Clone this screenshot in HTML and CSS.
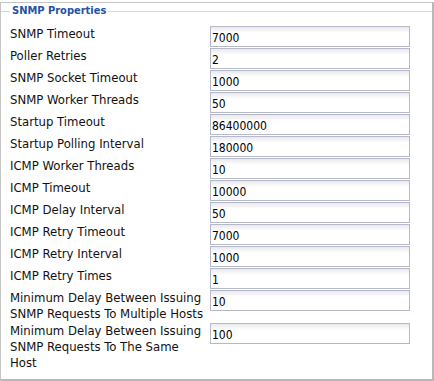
FILE: index.html
```html
<!DOCTYPE html>
<html lang="en">
<head>
    <meta charset="UTF-8">
    <title>SNMP Properties</title>
    <link rel="stylesheet" href="styles.css">
</head>
<body>
    <div class="panel">
        <fieldset class="props">
            <legend>SNMP Properties</legend>
            <div class="prop-grid">
                <label>SNMP Timeout</label>
                <input type="text" value="7000">
                <label>Poller Retries</label>
                <input type="text" value="2">
                <label>SNMP Socket Timeout</label>
                <input type="text" value="1000">
                <label>SNMP Worker Threads</label>
                <input type="text" value="50">
                <label>Startup Timeout</label>
                <input type="text" value="86400000">
                <label>Startup Polling Interval</label>
                <input type="text" value="180000">
                <label>ICMP Worker Threads</label>
                <input type="text" value="10">
                <label>ICMP Timeout</label>
                <input type="text" value="10000">
                <label>ICMP Delay Interval</label>
                <input type="text" value="50">
                <label>ICMP Retry Timeout</label>
                <input type="text" value="7000">
                <label>ICMP Retry Interval</label>
                <input type="text" value="1000">
                <label>ICMP Retry Times</label>
                <input type="text" value="1">
                <label>Minimum Delay Between Issuing SNMP Requests To Multiple Hosts</label>
                <input type="text" value="10">
                <label>Minimum Delay Between Issuing SNMP Requests To The Same Host</label>
                <input type="text" value="100">
            </div>
        </fieldset>
    </div>
</body>
</html>
```

FILE: styles.css
```css
* {
    margin: 0;
    padding: 0;
    box-sizing: border-box;
}

body {
    background: white;
    font-family: "DejaVu Sans Condensed", "DejaVu Sans", sans-serif;
    font-size: 13px;
    color: #111;
}

.panel {
    margin-top: 2px;
    width: 434px;
    height: 379px;
    border: 1px solid #c4c4c4;
    border-right: 2px solid #b8b8b8;
    border-bottom: 2px solid #b8b8b8;
}

.props {
    border: none;
    border-top: 1px solid #d6d6d6;
    margin-top: 3px;
    padding: 10px 0 0 9px;
}

.props legend {
    padding: 0 2px;
    color: #2553a3;
    font-weight: bold;
    font-size: 11px;
    line-height: 10px;
}

.prop-grid {
    display: grid;
    grid-template-columns: 200px 200px;
    row-gap: 1px;
    align-items: start;
}

.prop-grid label {
    line-height: 16px;
    padding-right: 5px;
}

.prop-grid input {
    width: 200px;
    height: 21px;
    border: 1px solid #b6b9c9;
    padding: 2px 1px 0 1px;
    font-family: "DejaVu Sans Condensed", "DejaVu Sans", sans-serif;
    font-size: 12px;
    color: #000;
    background: linear-gradient(#e9e9ec, #ffffff 6px);
    outline: none;
}
```
